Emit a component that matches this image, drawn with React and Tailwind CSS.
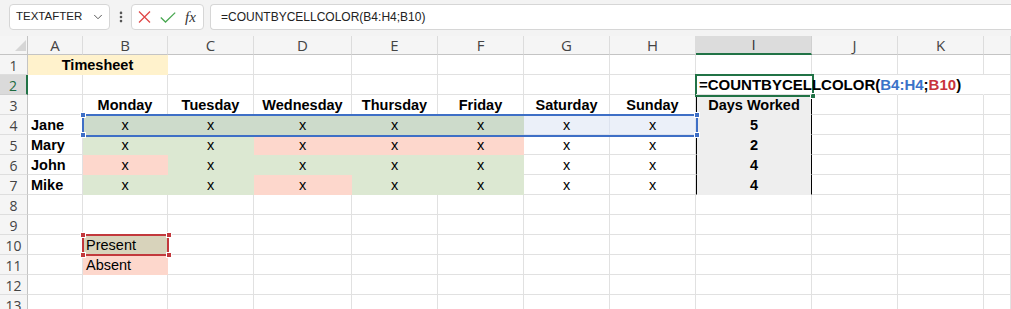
import { ChevronDown, EllipsisVertical } from 'lucide-react';

const GRID = 'grid grid-cols-[28px_55px_85px_86px_98px_86px_86px_86px_86px_116px_86px_86px_1fr]';

const LETTERS = ['A', 'B', 'C', 'D', 'E', 'F', 'G', 'H', 'I', 'J', 'K', ''];
const DAYS = ['Monday', 'Tuesday', 'Wednesday', 'Thursday', 'Friday', 'Saturday', 'Sunday'];

const FILL = {
  g: 'bg-[#dce8d2] border-[#dce8d2]',
  p: 'bg-[#fdd7cc] border-[#fdd7cc]',
  tg: 'bg-[#cddbcb] border-[#cddbcb]',
  tb: 'bg-[#ebf0f9] border-[#dde3ef]',
  gr: 'bg-[#eeeeee] border-[#eeeeee]',
  y: 'bg-[#fff2cc] border-[#fff2cc]',
  pr: 'bg-[#d8d3bb] border-[#d8d3bb]',
};

const people = [
  { name: 'Jane', fills: ['tg', 'tg', 'tg', 'tg', 'tg', 'tb', 'tb'], days: 5 },
  { name: 'Mary', fills: ['g', 'g', 'p', 'p', 'p', null, null], days: 2 },
  { name: 'John', fills: ['p', 'g', 'g', 'g', 'g', null, null], days: 4 },
  { name: 'Mike', fills: ['g', 'g', 'p', 'g', 'g', null, null], days: 4 },
];

function Cell({ fill, className = '', children }) {
  const base = fill ? FILL[fill] : 'border-[#e1e1e1]';
  return (
    <div className={`h-[20px] border-r border-b flex items-center pt-[2px] whitespace-nowrap ${base} ${className}`}>
      {children}
    </div>
  );
}

function RowHead({ n, active }) {
  return (
    <div
      className={`h-[20px] flex items-center justify-center pt-[1px] border-b text-[14px] font-['Open_Sans',sans-serif] ${
        active
          ? 'bg-[#dadada] text-[#1d6b3f] border-r-2 border-b-[#d0d0d0] border-r-[#217346]'
          : 'bg-[#f5f5f5] text-[#444] border-r border-b-[#dedede] border-r-[#c4c4c4]'
      }`}
    >
      {n}
    </div>
  );
}

function Row({ n, active, children }) {
  return (
    <div className={`${GRID} h-[20px]`}>
      <RowHead n={n} active={active} />
      {children}
    </div>
  );
}

function EmptyCells({ count }) {
  return Array.from({ length: count }).map((_, i) => <Cell key={i} />);
}

function Handle({ className }) {
  return <div className={`absolute w-[6px] h-[6px] border border-white ${className}`} />;
}

export default function App() {
  return (
    <div className="w-[1011px] h-[309px] overflow-hidden bg-white font-['Liberation_Sans',Arial,sans-serif] text-black">
      {/* formula bar */}
      <div className="h-[36px] bg-[#f3f3f3] flex items-start pt-[4px]">
        <div className="ml-[9px] w-[101px] h-[26px] rounded-[4px] border border-[#d6d6d6] bg-white flex items-center pl-[6px] pr-[4px]">
          <span className="text-[11.5px] text-[#222] flex-1">TEXTAFTER</span>
          <ChevronDown size={14} strokeWidth={1.5} className="text-[#444]" />
        </div>
        <div className="w-[21px] h-[26px] flex items-center justify-center">
          <EllipsisVertical size={14} strokeWidth={2.5} className="text-[#555]" />
        </div>
        <div className="w-[73px] h-[26px] rounded-[4px] border border-[#d6d6d6] bg-white flex items-center pl-[6px] gap-[9px]">
          <svg width="13" height="12" viewBox="0 0 13 12">
            <path d="M1 0.5 L12 11.5 M12 0.5 L1 11.5" stroke="#e04848" strokeWidth="1.3" fill="none" />
          </svg>
          <svg width="16" height="11" viewBox="0 0 16 11">
            <path d="M0.8 5.5 L5.5 10 L15.2 0.6" stroke="#4aa852" strokeWidth="1.3" fill="none" />
          </svg>
          <span className="font-['Liberation_Serif',serif] italic text-[15px] text-[#333] leading-none">fx</span>
        </div>
        <div className="ml-[6px] flex-1 h-[26px] rounded-l-[4px] border border-r-0 border-[#d6d6d6] bg-white flex items-center pl-[10px]">
          <span className="text-[12px] text-[#222]">=COUNTBYCELLCOLOR(B4:H4;B10)</span>
        </div>
      </div>

      {/* sheet */}
      <div className="relative">
        {/* column headers */}
        <div className={`${GRID} h-[19px] bg-[#f5f5f5]`}>
          <div className="relative border-r border-b border-[#c4c4c4]">
            <div className="absolute left-[15px] top-[4px] w-0 h-0 border-l-[11px] border-l-transparent border-b-[11px] border-b-[#d6d6d6]" />
          </div>
          {LETTERS.map((l, i) =>
            l === 'I' ? (
              <div key={i} className="flex items-center justify-center bg-[#dcdcdc] border-r border-b-2 border-r-[#d0d0d0] border-b-[#217346] text-[15px] text-[#333] font-['Open_Sans',sans-serif] leading-none">
                {l}
              </div>
            ) : (
              <div key={i} className="flex items-center justify-center border-r border-b border-r-[#dcdcdc] border-b-[#c4c4c4] text-[15px] text-[#444] font-['Open_Sans',sans-serif] leading-none">
                {l}
              </div>
            )
          )}
        </div>

        {/* row 1 */}
        <Row n={1}>
          <Cell fill="y" className="col-span-2 justify-center font-bold text-[14.5px]">Timesheet</Cell>
          <EmptyCells count={10} />
        </Row>

        {/* row 2 */}
        <Row n={2} active>
          <EmptyCells count={8} />
          <Cell className="relative z-10 pl-[3px] font-bold text-[15px] border-r-transparent">
            <span>
              =COUNTBYCELLCOLOR(<span className="text-[#3a72c8]">B4:H4</span>;<span className="text-[#c8323c]">B10</span>)
            </span>
          </Cell>
          <Cell className="border-r-transparent" />
          <Cell className="border-r-transparent" />
          <Cell />
        </Row>

        {/* row 3 */}
        <Row n={3}>
          <Cell />
          {DAYS.map((d) => (
            <Cell key={d} className="justify-center font-bold text-[14.5px]">{d}</Cell>
          ))}
          <Cell fill="gr" className="justify-center font-bold text-[14.5px] border-l border-l-black border-r-black">Days Worked</Cell>
          <EmptyCells count={3} />
        </Row>

        {/* rows 4-7 */}
        {people.map((p, r) => (
          <Row key={p.name} n={r + 4}>
            <Cell className="pl-[3px] font-bold text-[14.5px]">{p.name}</Cell>
            {p.fills.map((f, i) => (
              <Cell key={i} fill={f} className="justify-center text-[14.5px]">x</Cell>
            ))}
            <Cell fill="gr" className="justify-center font-bold text-[14.5px] border-l border-l-black border-r-black">{p.days}</Cell>
            <EmptyCells count={3} />
          </Row>
        ))}

        <Row n={8}><EmptyCells count={12} /></Row>
        <Row n={9}><EmptyCells count={12} /></Row>

        <Row n={10}>
          <Cell />
          <Cell fill="pr" className="pl-[3px] text-[14.5px]">Present</Cell>
          <EmptyCells count={10} />
        </Row>
        <Row n={11}>
          <Cell />
          <Cell fill="p" className="pl-[3px] text-[14.5px]">Absent</Cell>
          <EmptyCells count={10} />
        </Row>
        <Row n={12}><EmptyCells count={12} /></Row>
        <Row n={13}><EmptyCells count={12} /></Row>

        {/* blue range B4:H4 */}
        <div className="absolute left-[82px] top-[78px] w-[616px] h-[23px] border-2 border-[#3e6fc6]" />
        <Handle className="left-[80px] top-[76px] bg-[#3e6fc6]" />
        <Handle className="left-[80px] top-[96px] bg-[#3e6fc6]" />
        <Handle className="left-[694px] top-[76px] bg-[#3e6fc6]" />
        <Handle className="left-[694px] top-[96px] bg-[#3e6fc6]" />

        {/* red range B10 */}
        <div className="absolute left-[82px] top-[198px] w-[87px] h-[22px] border-2 border-[#c2383c]" />
        <Handle className="left-[80px] top-[196px] bg-[#c2383c]" />
        <Handle className="left-[80px] top-[216px] bg-[#c2383c]" />
        <Handle className="left-[166px] top-[196px] bg-[#c2383c]" />
        <Handle className="left-[166px] top-[216px] bg-[#c2383c]" />

        {/* active cell I2 */}
        <div className="absolute left-[695px] top-[38px] w-[119px] h-[23px] border-2 border-[#217346]" />
        <Handle className="left-[810px] top-[57px] bg-[#217346]" />
      </div>
    </div>
  );
}
